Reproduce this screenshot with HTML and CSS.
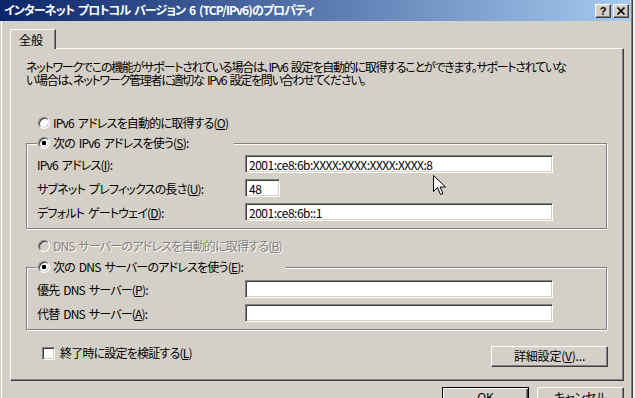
FILE: index.html
```html
<!DOCTYPE html>
<html lang="ja">

<head>
    <meta charset="UTF-8">
    <title>インターネット プロトコル バージョン 6 (TCP/IPv6)のプロパティ</title>
    <link rel="stylesheet" href="styles.css">
</head>

<body>

    <div class="window">
        <div class="titlebar">
            <span class="title">インターネット プロトコル バージョン 6 (TCP/IPv6)のプロパティ</span>
            <div class="caption-buttons">
                <button class="cap-btn help">?</button>
                <button class="cap-btn close">
                    <svg width="14" height="12" viewBox="0 0 14 12">
                        <path d="M3.5 2.5l7 7M10.5 2.5l-7 7" stroke="#000" stroke-width="1.7" fill="none" />
                    </svg>
                </button>
            </div>
        </div>

        <div class="client">
            <div class="tabs">
                <div class="tab">全般</div>
            </div>

            <div class="panel">
                <p class="desc">ネットワークでこの機能がサポートされている場合は、IPv6 設定を自動的に取得することができます。サポートされていな<br>い場合は、ネットワーク管理者に適切な IPv6 設定を問い合わせてください。</p>

                <label class="radio-row ip-auto">
                    <input type="radio" name="ip">
                    <span>IPv6 アドレスを自動的に取得する(<u>O</u>)</span>
                </label>

                <fieldset class="group ip-group">
                    <legend>
                        <label class="radio-row">
                            <input type="radio" name="ip" checked>
                            <span>次の IPv6 アドレスを使う(<u>S</u>):</span>
                        </label>
                    </legend>
                    <div class="fields">
                        <label>IPv6 アドレス(<u>I</u>):</label>
                        <input class="edit wide" type="text" value="2001:ce8:6b:XXXX:XXXX:XXXX:XXXX:8">
                        <label>サブネット プレフィックスの長さ(<u>U</u>):</label>
                        <input class="edit short" type="text" value="48">
                        <label>デフォルト ゲートウェイ(<u>D</u>):</label>
                        <input class="edit wide" type="text" value="2001:ce8:6b::1">
                    </div>
                </fieldset>

                <label class="radio-row dns-auto disabled">
                    <input type="radio" name="dns" disabled>
                    <span>DNS サーバーのアドレスを自動的に取得する(<u>B</u>)</span>
                </label>

                <fieldset class="group dns-group">
                    <legend>
                        <label class="radio-row">
                            <input type="radio" name="dns" checked>
                            <span>次の DNS サーバーのアドレスを使う(<u>E</u>):</span>
                        </label>
                    </legend>
                    <div class="fields">
                        <label>優先 DNS サーバー(<u>P</u>):</label>
                        <input class="edit wide" type="text" value="">
                        <label>代替 DNS サーバー(<u>A</u>):</label>
                        <input class="edit wide" type="text" value="">
                    </div>
                </fieldset>

                <div class="panel-footer">
                    <label class="check-row">
                        <input type="checkbox">
                        <span>終了時に設定を検証する(<u>L</u>)</span>
                    </label>
                    <button class="btn advanced">詳細設定(<u>V</u>)...</button>
                </div>
            </div>

            <div class="dialog-buttons">
                <button class="btn default">OK</button>
                <button class="btn">キャンセル</button>
            </div>
        </div>

        <!-- mouse pointer -->
        <svg class="pointer" width="13" height="21" viewBox="0 0 13 21">
            <path d="M0.5 0.5v16l4-4 3 7 2.5-1-3-6.5h5.5z" fill="#fff" stroke="#000" stroke-width="1" />
        </svg>
    </div>

</body>

</html>
```

FILE: styles.css
```css
body {
    margin: 0;
    background-color: #f0f0f0;
    font-family: "Noto Sans CJK JP", sans-serif;
    font-size: 12px;
    font-feature-settings: "palt";
    letter-spacing: -0.8px;
    word-spacing: 2px;
    color: #000;
}

.window {
    position: relative;
    width: 632px;
    height: 398px;
    overflow: hidden;
    background-color: #d4d0c8;
    border-right: 1px solid #404040;
    box-shadow: inset -1px 0 #808080;
}

/* Title bar */
.titlebar {
    display: flex;
    justify-content: space-between;
    align-items: flex-start;
    width: 630px;
    height: 21px;
    padding: 0 1px 0 4px;
    box-sizing: border-box;
    background: linear-gradient(to right, #0a246a, #a6caf0);
}

.title {
    color: #fff;
    font-weight: bold;
    letter-spacing: -0.9px;
    line-height: 20px;
    white-space: nowrap;
}

.caption-buttons {
    display: flex;
    gap: 2px;
    padding-top: 4px;
}

.cap-btn {
    width: 16px;
    height: 14px;
    padding: 0;
    display: flex;
    align-items: center;
    justify-content: center;
    background-color: #d4d0c8;
    border: 1px solid;
    border-color: #fff #404040 #404040 #fff;
    box-shadow: inset -1px -1px #808080;
    font-family: "Liberation Sans", sans-serif;
    font-size: 11px;
    font-weight: bold;
    letter-spacing: 0;
    line-height: 12px;
}

/* Client area */
.client {
    margin-left: 1px;
    border-left: 1px solid #fff;
    padding: 8px 8px 0 8px;
}

.tabs {
    display: flex;
}

.tab {
    position: relative;
    z-index: 1;
    width: 46px;
    height: 20px;
    margin-bottom: -1px;
    box-sizing: border-box;
    padding-left: 8px;
    line-height: 19px;
    letter-spacing: 0;
    background-color: #d4d0c8;
    border-top: 1px solid #fff;
    border-left: 1px solid #fff;
    border-right: 1px solid #404040;
    border-top-left-radius: 2px;
    box-shadow: inset -1px 0 #808080;
}

.panel {
    display: flex;
    flex-direction: column;
    height: 333px;
    box-sizing: border-box;
    padding: 11px 16px 0 15px;
    border: 1px solid;
    border-color: #fff #404040 #404040 #fff;
    box-shadow: inset -1px -1px #808080;
}

.desc {
    margin: 0;
    line-height: 13px;
    letter-spacing: -1.25px;
    white-space: nowrap;
}

/* Radio buttons and check box */
.radio-row,
.check-row {
    display: flex;
    align-items: center;
    gap: 3px;
    height: 14px;
    line-height: 14px;
    white-space: nowrap;
}

.radio-row input {
    appearance: none;
    flex: none;
    width: 12px;
    height: 12px;
    margin: 0;
    border-radius: 50%;
    border: 1px solid;
    border-color: #808080 #fff #fff #808080;
    box-shadow: inset 1px 1px #404040, inset -1px -1px #d4d0c8;
    background-color: #fff;
}

.radio-row input:checked {
    background: radial-gradient(circle, #000 0, #000 2px, #fff 2.6px);
}

.radio-row.disabled {
    color: #808080;
    text-shadow: 1px 1px #fff;
}

.radio-row input:disabled {
    background: #d4d0c8;
}

.ip-auto {
    margin: 30px 0 0 12px;
}

.dns-auto {
    margin: 10px 0 0 12px;
}

/* Group boxes */
.group {
    margin: 6px 0 0;
    min-width: 0;
    padding: 5px 0 7px 10px;
    border: 1px solid #808080;
    box-shadow: 1px 1px #fff, inset 1px 1px #fff;
}

.group legend {
    padding: 0 0 0 1px;
    background-color: #d4d0c8;
}

.ip-group legend {
    width: 196px;
}

.dns-group {
    margin-top: 7px;
    padding-top: 6px;
}

.dns-group legend {
    width: 248px;
}

.fields {
    display: grid;
    grid-template-columns: 208px auto;
    justify-items: start;
    align-items: center;
    row-gap: 6px;
    white-space: nowrap;
}

.edit {
    height: 18px;
    box-sizing: border-box;
    margin: 0;
    padding: 0 0 0 3px;
    border: 1px solid;
    border-color: #808080 #fff #fff #808080;
    box-shadow: inset 1px 1px #404040, inset -1px -1px #d4d0c8;
    background-color: #fff;
    font-family: "Noto Sans CJK JP", sans-serif;
    font-size: 12px;
    letter-spacing: -0.5px;
    color: #000;
    outline: none;
}

.edit.wide {
    width: 308px;
}

.edit.short {
    width: 35px;
}

/* Footer of the panel */
.panel-footer {
    display: flex;
    justify-content: space-between;
    align-items: flex-start;
    margin-top: 16px;
    padding-left: 16px;
}

.check-row {
    gap: 5px;
}

.check-row input {
    appearance: none;
    flex: none;
    width: 13px;
    height: 13px;
    margin: 0;
    border: 1px solid;
    border-color: #808080 #fff #fff #808080;
    box-shadow: inset 1px 1px #404040, inset -1px -1px #d4d0c8;
    background-color: #fff;
}

.btn {
    height: 23px;
    padding: 0 0 2px;
    box-sizing: border-box;
    background-color: #d4d0c8;
    border: 1px solid;
    border-color: #fff #404040 #404040 #fff;
    box-shadow: inset -1px -1px #808080;
    font-family: "Noto Sans CJK JP", sans-serif;
    font-size: 12px;
    font-feature-settings: "palt";
    letter-spacing: -0.2px;
    color: #000;
}

.btn.advanced {
    width: 117px;
    height: 21px;
    margin-right: -1px;
}

.dialog-buttons {
    display: flex;
    justify-content: flex-end;
    gap: 8px;
    margin-top: 6px;
}

.dialog-buttons .btn {
    width: 87px;
    padding-bottom: 4px;
}

.btn.default {
    border: 1px solid #000;
    box-shadow: inset 1px 1px #fff, inset -1px -1px #404040, inset -2px -2px #808080;
}

.pointer {
    position: absolute;
    left: 433px;
    top: 175px;
}
```
